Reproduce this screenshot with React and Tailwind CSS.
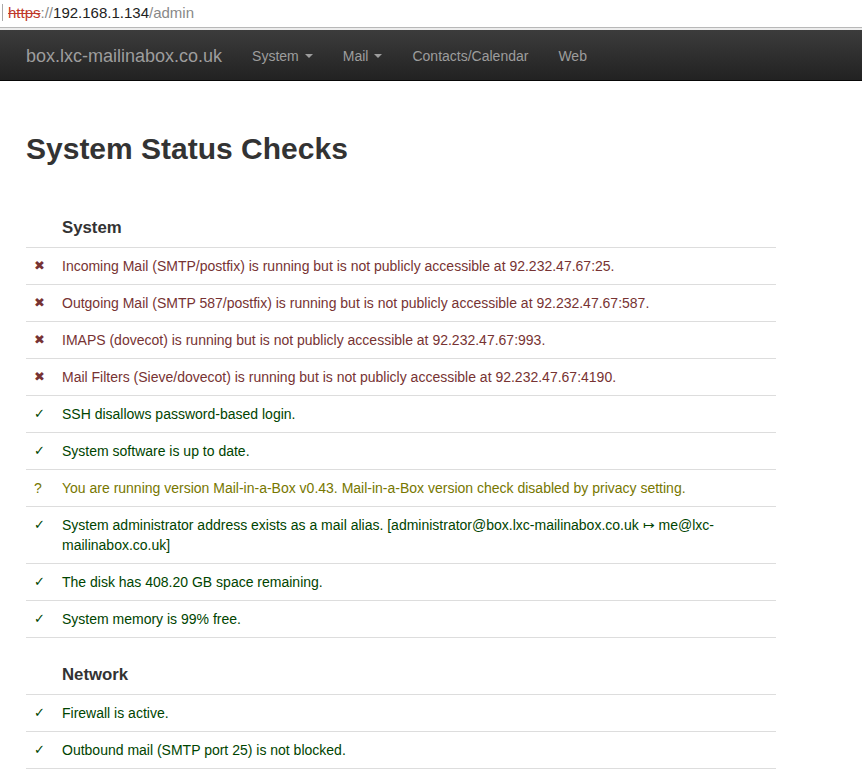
import React from "react";

const sections = [
  {
    title: "System",
    rows: [
      { s: "error", t: "Incoming Mail (SMTP/postfix) is running but is not publicly accessible at 92.232.47.67:25." },
      { s: "error", t: "Outgoing Mail (SMTP 587/postfix) is running but is not publicly accessible at 92.232.47.67:587." },
      { s: "error", t: "IMAPS (dovecot) is running but is not publicly accessible at 92.232.47.67:993." },
      { s: "error", t: "Mail Filters (Sieve/dovecot) is running but is not publicly accessible at 92.232.47.67:4190." },
      { s: "ok", t: "SSH disallows password-based login." },
      { s: "ok", t: "System software is up to date." },
      { s: "warning", t: "You are running version Mail-in-a-Box v0.43. Mail-in-a-Box version check disabled by privacy setting." },
      { s: "ok", t: "System administrator address exists as a mail alias. [administrator@box.lxc-mailinabox.co.uk \u21a6 me@lxc-mailinabox.co.uk]" },
      { s: "ok", t: "The disk has 408.20 GB space remaining." },
      { s: "ok", t: "System memory is 99% free." },
    ],
  },
  {
    title: "Network",
    rows: [
      { s: "ok", t: "Firewall is active." },
      { s: "ok", t: "Outbound mail (SMTP port 25) is not blocked." },
    ],
  },
];

const statusStyle = {
  error: { color: "text-[#773333]", icon: "\u2716", iconCls: "text-[13px]" },
  ok: { color: "text-[#004400]", icon: "\u2713", iconCls: "text-[13px]" },
  warning: { color: "text-[#777700]", icon: "?", iconCls: "text-[14px]" },
};

const Caret = () => (
  <span className="ml-[6px] inline-block w-0 h-0 border-l-[4px] border-r-[4px] border-t-[4px] border-l-transparent border-r-transparent border-t-[#9d9d9d] align-middle"></span>
);

const App = () => {
  return (
    <div className="min-h-[771px] bg-white font-['Liberation_Sans',Arial,sans-serif] text-[14px] text-[#333]">
      {/* address bar */}
      <div className="h-[27px] flex items-center bg-white relative">
        <div className="absolute left-[2px] top-[4px] w-px h-[17px] bg-[#aaa]"></div>
        <div className="pl-[8px] pb-[3px] text-[15px] leading-none">
          <span className="text-[#c0392b] line-through decoration-[#c0392b]">https</span>
          <span className="text-[#888]">://</span>
          <span className="text-[#222]">192.168.1.134</span>
          <span className="text-[#888]">/admin</span>
        </div>
      </div>
      <div className="h-px bg-[#b8b8b8]"></div>
      <div className="h-[2px] bg-[#ececec]"></div>

      {/* navbar */}
      <nav className="h-[51px] bg-gradient-to-b from-[#3c3c3c] to-[#222] border-b border-[#080808] flex items-center pl-[11px] pt-[2px]">
        <span className="px-[15px] text-[18px] text-[#9d9d9d]">box.lxc-mailinabox.co.uk</span>
        <span className="px-[15px] text-[#9d9d9d] flex items-center">System<Caret /></span>
        <span className="px-[15px] text-[#9d9d9d] flex items-center">Mail<Caret /></span>
        <span className="px-[15px] text-[#9d9d9d]">Contacts/Calendar</span>
        <span className="px-[15px] text-[#9d9d9d]">Web</span>
      </nav>

      <div className="pl-[26px]">
        <h2 className="mt-[51px] text-[30px] leading-[33px] font-bold text-[#333]">System Status Checks</h2>

        <table className="mt-[26px] w-[750px] border-collapse leading-[20px]">
          <tbody>
            {sections.map((sec, si) => (
              <React.Fragment key={sec.title}>
                <tr>
                  <td className={`w-[28px] ${si === 0 ? "" : "border-t border-[#ddd]"}`}></td>
                  <td
                    className={`pt-[25px] pb-[7px] px-[8px] text-[16.8px] leading-[24px] font-bold text-[#333] ${si === 0 ? "" : "border-t border-[#ddd]"}`}
                  >
                    {sec.title}
                  </td>
                </tr>
                {sec.rows.map((r, i) => {
                  const st = statusStyle[r.s];
                  return (
                    <tr key={i} className={st.color}>
                      <td className={`border-t border-[#ddd] p-[8px] pr-0 align-top ${st.iconCls}`}>{st.icon}</td>
                      <td className="border-t border-[#ddd] p-[8px] align-top">{r.t}</td>
                    </tr>
                  );
                })}
              </React.Fragment>
            ))}
            <tr>
              <td className="border-t border-[#ddd]"></td>
              <td className="border-t border-[#ddd]"></td>
            </tr>
          </tbody>
        </table>
      </div>
    </div>
  );
};

export default App;
